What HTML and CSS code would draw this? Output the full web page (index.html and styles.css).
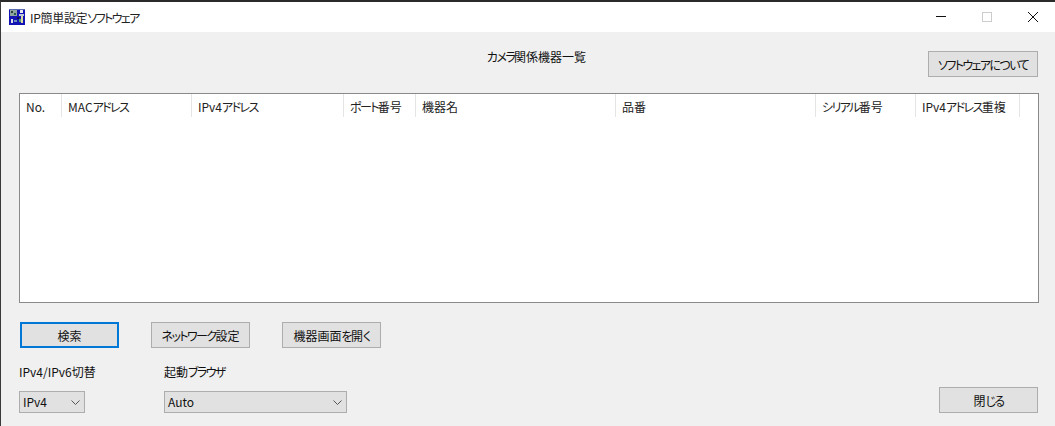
FILE: index.html
```html
<!DOCTYPE html>
<html lang="ja">
<head>
<meta charset="utf-8">
<title>IP簡単設定ソフトウェア</title>
<link rel="stylesheet" href="styles.css">
</head>
<body>
<div class="window">
  <header class="titlebar">
    <svg class="app-icon" width="16" height="16" viewBox="0 0 16 16">
      <rect width="16" height="16" fill="#1414b4"/>
      <rect x="0" y="0" width="16" height="1" fill="#5a6ab0"/>
      <rect x="1" y="1" width="7" height="6" fill="#8fa6a0"/>
      <rect x="2" y="2" width="2" height="2" fill="#24423a"/>
      <rect x="5" y="4" width="2" height="2" fill="#2a5a4a"/>
      <rect x="11" y="1" width="3" height="3" fill="#e8e8f0"/>
      <rect x="10" y="5" width="5" height="2" fill="#b8c4d8"/>
      <rect x="12" y="7" width="2" height="7" fill="#d8d8a0"/>
      <rect x="10" y="10" width="2" height="3" fill="#50a070"/>
      <rect x="2" y="10" width="2" height="4" fill="#e0e0e8"/>
      <rect x="5" y="11" width="3" height="2" fill="#7090c0"/>
      <rect x="8" y="8" width="2" height="2" fill="#101050"/>
    </svg>
    <span class="app-title">IP簡単設定<span class="kana">ソフトウェア</span></span>
    <div class="caption-buttons">
      <svg class="caption-btn" width="46" height="30" viewBox="0 0 46 30"><path d="M19 14.500h10" stroke="#111" fill="none"/></svg>
      <svg class="caption-btn" width="46" height="30" viewBox="0 0 46 30"><rect x="19.500" y="10.500" width="9" height="9" stroke="#ccc" fill="none"/></svg>
      <svg class="caption-btn" width="46" height="30" viewBox="0 0 46 30"><path d="M19 10l10 10M29 10l-10 10" stroke="#111" fill="none"/></svg>
    </div>
  </header>

  <main class="content">
    <div class="top-row">
      <h1 class="list-title"><span class="kana">カメラ</span>関係機器一覧</h1>
      <button class="btn btn-about"><span class="kana">ソフトウェアについて</span></button>
    </div>

    <section class="device-table">
      <div class="table-head">
        <div class="col col-no">No.</div>
        <div class="col col-mac">MAC<span class="kana">アドレス</span></div>
        <div class="col col-ip">IPv4<span class="kana">アドレス</span></div>
        <div class="col col-port"><span class="kana">ポート</span>番号</div>
        <div class="col col-name">機器名</div>
        <div class="col col-model">品番</div>
        <div class="col col-serial"><span class="kana">シリアル</span>番号</div>
        <div class="col col-dup">IPv4<span class="kana">アドレス</span>重複</div>
      </div>
    </section>

    <div class="action-row">
      <button class="btn btn-focus">検索</button>
      <button class="btn"><span class="kana">ネットワーク</span>設定</button>
      <button class="btn">機器画面<span class="kana">を</span>開<span class="kana">く</span></button>
    </div>

    <div class="bottom-row">
      <div class="field field-ip">
        <label class="field-label">IPv4/IPv6切替</label>
        <div class="select select-ip">
          <span>IPv4</span>
          <svg width="9" height="5" viewBox="0 0 9 5"><path d="M0.500 0.500l4 4 4-4" stroke="#555" fill="none"/></svg>
        </div>
      </div>
      <div class="field field-browser">
        <label class="field-label">起動<span class="kana">ブラウザ</span></label>
        <div class="select select-browser">
          <span>Auto</span>
          <svg width="9" height="5" viewBox="0 0 9 5"><path d="M0.500 0.500l4 4 4-4" stroke="#555" fill="none"/></svg>
        </div>
      </div>
      <button class="btn btn-close">閉<span class="kana">じる</span></button>
    </div>
  </main>
</div>
</body>
</html>
```

FILE: styles.css
```css
* { box-sizing: border-box; }
html, body { margin: 0; padding: 0; height: 100%; }
body {
  font-family: "Noto Sans CJK JP", "Noto Sans", sans-serif;
  font-size: 12px;
  font-feature-settings: "palt";
  color: #111;
  background: #f0f0f0;
  overflow: hidden;
}
.kana { letter-spacing: -1.6px; }
.window {
  width: 1055px;
  height: 426px;
  border-top: 2px solid #2a2a2a;
  border-left: 1px solid #3a3a3a;
  display: flex;
  flex-direction: column;
}
.titlebar {
  height: 30px;
  background: #fff;
  display: flex;
  align-items: center;
  padding-left: 8px;
  flex: none;
}
.app-icon { flex: none; margin-right: 5px; }
.app-title { font-size: 12px; letter-spacing: -0.3px; color: #222; }
.caption-buttons { margin-left: auto; display: flex; }
.caption-btn { display: block; }
.content {
  flex: 1;
  padding: 19px 17px 13px 18px;
  display: flex;
  flex-direction: column;
}
.top-row {
  display: flex;
  justify-content: flex-end;
  align-items: flex-start;
  height: 42px;
}
.list-title {
  margin: -3px 0 0;
  font-size: 12px;
  font-weight: 400;
  line-height: 18px;
  flex: 1;
  text-align: center;
  padding-left: 126px;
}
.btn {
  width: 99px;
  height: 26px;
  padding: 0;
  font: inherit;
  font-feature-settings: inherit;
  white-space: nowrap;
  color: #111;
  background: #e1e1e1;
  border: 1px solid #adadad;
  border-radius: 0;
}
.btn-about { width: 110px; }
.btn-focus { border: 2px solid #0078d7; }
.device-table {
  height: 210px;
  margin-right: -1px;
  background: #fff;
  border: 1px solid #8a8a8a;
  flex: none;
}
.table-head {
  display: flex;
  height: 25px;
  padding-bottom: 2px;
}
.col {
  height: 23px;
  line-height: 26px;
  padding-left: 6px;
  border-right: 1px solid #e5e5e5;
  white-space: nowrap;
  color: #222;
}
.col-no { width: 42px; }
.col-mac { width: 130px; }
.col-ip { width: 152px; }
.col-port { width: 72px; }
.col-name { width: 200px; }
.col-model { width: 200px; }
.col-serial { width: 100px; }
.col-dup { width: 104px; }
.action-row {
  display: flex;
  gap: 32px;
  margin-top: 19px;
  padding-left: 1px;
}
.bottom-row {
  display: flex;
  align-items: flex-end;
  margin-top: 15px;
}
.field { display: flex; flex-direction: column; }
.field-ip { width: 145px; }
.field-label { line-height: 18px; margin-bottom: 10px; }
.select {
  height: 22px;
  background: #e1e1e1;
  border: 1px solid #adadad;
  display: flex;
  align-items: center;
  justify-content: space-between;
  padding: 0 4px 2px 3px;
}
.select svg { margin-top: 2px; }
.select-ip { width: 66px; }
.select-browser { width: 183px; }
.btn-close { margin-left: auto; }
```
